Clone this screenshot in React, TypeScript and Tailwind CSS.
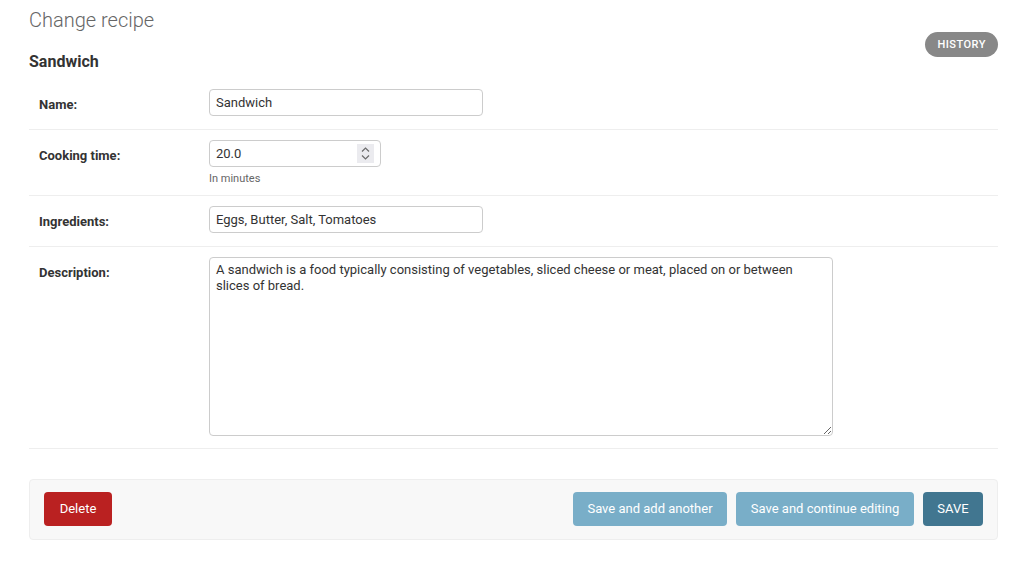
import React from "react";

const font = { fontFamily: "Roboto, 'Liberation Sans', sans-serif" };

function Row({
  label,
  children,
  pb = "pb-[13px]",
}: {
  label: string;
  children: React.ReactNode;
  pb?: string;
}) {
  return (
    <div className={`flex px-[10px] pt-[10px] ${pb} border-b border-[#eee]`}>
      <label className="w-[170px] shrink-0 pt-[8px] text-[13px] leading-4 font-bold text-[#333]">
        {label}
      </label>
      <div>{children}</div>
    </div>
  );
}

function TextInput({ value, width }: { value: string; width: string }) {
  return (
    <input
      readOnly
      defaultValue={value}
      className={`${width} h-[27px] border border-[#ccc] rounded-[4px] px-[6px] text-[13px] text-[#333] bg-white outline-none`}
      style={font}
    />
  );
}

function Spinner() {
  return (
    <div className="absolute right-[7px] top-[4px] w-[17px] h-[19px] bg-[#ebebef] flex flex-col items-center justify-center gap-[3px]">
      <svg width="9" height="5" viewBox="0 0 9 5">
        <path d="M1 4.5 L4.5 1 L8 4.5" fill="none" stroke="#6b6b6b" strokeWidth="1.2" />
      </svg>
      <svg width="9" height="5" viewBox="0 0 9 5">
        <path d="M1 0.5 L4.5 4 L8 0.5" fill="none" stroke="#6b6b6b" strokeWidth="1.2" />
      </svg>
    </div>
  );
}

export default function App() {
  return (
    <div className="min-h-[567px] bg-white pl-[29px] pr-[25px] pt-[8px] pb-[27px] text-[#333]" style={font}>
      <div className="flex justify-between items-start">
        <div>
          <h1 className="text-[20px] leading-6 font-light text-[#666]">Change recipe</h1>
          <h2 className="mt-[20px] text-[16px] leading-5 font-bold text-[#333]">Sandwich</h2>
        </div>
        <a className="mt-[24px] h-[25px] px-[12px] pt-[2px] flex items-center rounded-full bg-[#888] text-white text-[11px] font-medium uppercase tracking-[0.5px]">
          History
        </a>
      </div>

      <div className="mt-[7px]">
        <Row label="Name:">
          <TextInput value="Sandwich" width="w-[274px]" />
        </Row>
        <Row label="Cooking time:" pb="pb-[10px]">
          <div className="relative w-[172px]">
            <TextInput value="20.0" width="w-[172px]" />
            <Spinner />
          </div>
          <div className="mt-[6px] text-[11px] leading-[12px] text-[#666]">In minutes</div>
        </Row>
        <Row label="Ingredients:">
          <TextInput value="Eggs, Butter, Salt, Tomatoes" width="w-[274px]" />
        </Row>
        <Row label="Description:" pb="pb-[12px]">
          <textarea
            readOnly
            defaultValue="A sandwich is a food typically consisting of vegetables, sliced cheese or meat, placed on or between slices of bread."
            className="block w-[624px] h-[179px] border border-[#ccc] rounded-[4px] px-[6px] py-[4px] text-[13px] leading-4 text-[#333] bg-white outline-none"
            style={font}
          />
        </Row>
      </div>

      <div className="mt-[30px] flex items-center justify-between bg-[#f8f8f8] border border-[#eee] rounded-[4px] px-[14px] pt-[12px] pb-[13px]">
        <button className="h-[34px] w-[68px] rounded-[4px] bg-[#ba2121] text-white text-[13px]">
          Delete
        </button>
        <div className="flex gap-[9px]">
          <button className="h-[34px] w-[154px] rounded-[4px] bg-[#79aec8] text-white text-[13px]">
            Save and add another
          </button>
          <button className="h-[34px] w-[178px] rounded-[4px] bg-[#79aec8] text-white text-[13px]">
            Save and continue editing
          </button>
          <button className="h-[34px] w-[60px] rounded-[4px] bg-[#417690] text-white text-[13px]">
            SAVE
          </button>
        </div>
      </div>
    </div>
  );
}
